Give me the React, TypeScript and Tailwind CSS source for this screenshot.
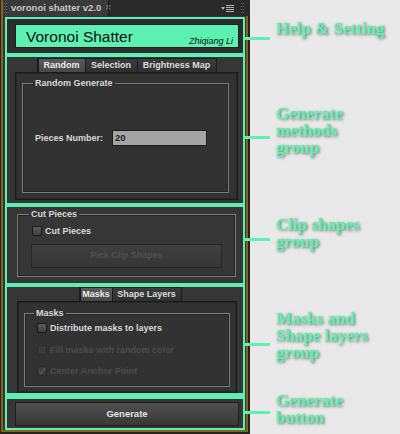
import React from "react";

function Grip() {
  return (
    <svg width="3" height="10" viewBox="0 0 3 10" className="shrink-0">
      <rect x="0" y="0" width="1" height="1" fill="#6a6a6a" />
      <rect x="2" y="0" width="1" height="1" fill="#6a6a6a" />
      <rect x="0" y="3" width="1" height="1" fill="#6a6a6a" />
      <rect x="2" y="3" width="1" height="1" fill="#6a6a6a" />
      <rect x="0" y="6" width="1" height="1" fill="#6a6a6a" />
      <rect x="2" y="6" width="1" height="1" fill="#6a6a6a" />
      <rect x="0" y="9" width="1" height="1" fill="#6a6a6a" />
      <rect x="2" y="9" width="1" height="1" fill="#6a6a6a" />
    </svg>
  );
}

function MenuIcon() {
  return (
    <svg width="13" height="7" viewBox="0 0 13 7" className="shrink-0">
      <path d="M0 2 L4 2 L2 5 Z" fill="#b0b0b0" />
      <rect x="5" y="0" width="8" height="1" fill="#b0b0b0" />
      <rect x="5" y="2" width="8" height="1" fill="#b0b0b0" />
      <rect x="5" y="4" width="8" height="1" fill="#b0b0b0" />
      <rect x="5" y="6" width="8" height="1" fill="#b0b0b0" />
    </svg>
  );
}

function Check({ checked, disabled }: { checked?: boolean; disabled?: boolean }) {
  return (
    <div
      className={
        disabled
          ? "w-[10px] h-[10px] shrink-0 rounded-[2px] border border-[#2b2b2b] bg-[#3a3a3a] flex items-center justify-center"
          : "w-[10px] h-[10px] shrink-0 rounded-[2px] border border-[#1a1a1a] bg-linear-to-b from-[#5e5e5e] to-[#3d3d3d] flex items-center justify-center"
      }
    >
      {checked && (
        <svg width="8" height="8" viewBox="0 0 8 8">
          <path d="M1 4 L3 6.5 L7 1" stroke="#555555" strokeWidth="1.6" fill="none" />
        </svg>
      )}
    </div>
  );
}

function Tab({ label, active, w }: { label: string; active?: boolean; w: string }) {
  return (
    <div
      className={
        active
          ? `${w} h-full flex items-center justify-center text-[9px] font-bold leading-none border-t border-x border-[#1c1c1c] bg-linear-to-b from-[#5a5a5a] to-[#484848] text-[#ececec]`
          : `${w} h-full flex items-center justify-center text-[9px] font-bold leading-none border-t border-r border-[#1c1c1c] bg-linear-to-b from-[#3c3c3c] to-[#2f2f2f] text-[#dedede]`
      }
    >
      {label}
    </div>
  );
}

const labelText = "text-[9px] font-bold leading-[12px] text-[#dadada]";

export default function App() {
  return (
    <div className="w-[400px] h-[434px] flex bg-[#e9e9e9] overflow-hidden font-['Liberation_Sans',Arial,sans-serif]">
      {/* Panel */}
      <div className="w-[250px] h-full shrink-0 bg-[#242424] flex flex-col">
        {/* tab strip */}
        <div className="h-[16px] flex bg-[#2a2a2a]">
          <div className="ml-[1px] w-[107px] h-full bg-[#3a3a3a] border-l-2 border-[#84641a] flex items-center">
            <div className="ml-[1px]">
              <Grip />
            </div>
            <span className="ml-[4px] text-[9.5px] font-bold text-[#c8c8c8] leading-none whitespace-nowrap">
              voronoi shatter v2.0
            </span>
            <span className="ml-[4px] text-[10px] text-[#8a8a8a] leading-none">×</span>
          </div>
          <div className="w-px h-full bg-[#1c1c1c]" />
          <div className="flex-1 flex items-center justify-end pr-[6px] gap-[7px]">
            <MenuIcon />
            <Grip />
          </div>
        </div>

        {/* body */}
        <div className="ml-[1px] w-[247px] h-[416px] border-x-2 border-b-2 border-[#84641a] bg-[#363636] flex flex-col">
          {/* Box 1: title */}
          <div className="ml-[2px] mt-[1px] w-[240px] h-[38px] shrink-0 border-2 border-[#5cf0b2] bg-[#2d2d2d] pt-[5px] pl-[8px] pr-[4px]">
            <div className="h-[24px] bg-[#5cf0b2] border border-[#1e1e1e] flex justify-between">
              <span className="self-center pt-[2px] pl-[10px] text-[15.5px] leading-none text-[#111] whitespace-nowrap">
                Voronoi Shatter
              </span>
              <span className="self-end pb-[1px] pr-[5px] text-[9px] italic leading-[10px] text-[#111] whitespace-nowrap">
                Zhiqiang Li
              </span>
            </div>
          </div>

          {/* Box 2: generate methods */}
          <div className="ml-[2px] w-[240px] h-[150px] shrink-0 border-2 border-[#5cf0b2] flex flex-col pt-[1px] pl-[8px] pr-[5px] pb-[3px]">
            <div className="h-[14px] shrink-0 flex justify-center">
              <div className="flex border-l border-[#1c1c1c]">
                <Tab label="Random" active w="w-[48px]" />
                <Tab label="Selection" w="w-[52px]" />
                <Tab label="Brightness Map" w="w-[79px]" />
              </div>
            </div>
            <div className="flex-1 border border-[#1a1a1a] shadow-[inset_0_0_0_1px_#272727] bg-[#323232] pt-[4px] pl-[6px] pr-[8px] pb-[6px] flex flex-col">
              <fieldset className="flex-1 min-w-0 border border-[#7c7c7c] shadow-[inset_0_0_0_1px_#262626]">
                <legend className={`ml-[10px] px-[2px] ${labelText}`}>Random Generate</legend>
                <div className="mt-[41px] pl-[12px] flex items-center">
                  <span className={`w-[77px] ${labelText}`}>Pieces Number:</span>
                  <div className="w-[95px] h-[16px] bg-[#a4a4a4] border border-[#1b1b1b] pl-[2px] pt-[1px] text-[9.5px] font-bold leading-[12px] text-[#1e1e1e]">
                    20
                  </div>
                </div>
              </fieldset>
            </div>
          </div>

          {/* Box 3: clip shapes */}
          <div className="ml-[2px] w-[240px] h-[80px] shrink-0 border-2 border-[#5cf0b2] pt-[1px] pl-[10px] pr-[7px] pb-[6px] flex flex-col">
            <fieldset className="flex-1 min-w-0 border border-[#7c7c7c] shadow-[inset_0_0_0_1px_#262626]">
              <legend className={`ml-[11px] px-[2px] ${labelText}`}>Cut Pieces</legend>
              <div className="mt-[6px] ml-[14px] h-[10px] flex items-center gap-[3px]">
                <Check />
                <span className="text-[9px] font-bold leading-[10px] text-[#dadada]">Cut Pieces</span>
              </div>
              <div className="mt-[8px] ml-[13px] w-[191px] h-[24px] border border-[#262626] bg-linear-to-b from-[#3f3f3f] to-[#363636] flex items-center justify-center text-[9px] font-bold text-[#505050]">
                Pick Clip Shapes
              </div>
            </fieldset>
          </div>

          {/* Box 4: masks & shape layers */}
          <div className="ml-[2px] w-[240px] h-[111px] shrink-0 border-x-2 border-t-2 border-b-[3px] border-[#5cf0b2] flex flex-col pl-[10px] pr-[6px]">
            <div className="h-[14px] shrink-0 flex justify-center pl-[6px]">
              <div className="flex border-l border-[#1c1c1c]">
                <Tab label="Masks" active w="w-[33px]" />
                <Tab label="Shape Layers" w="w-[69px]" />
              </div>
            </div>
            <div className="flex-1 border border-[#1a1a1a] shadow-[inset_0_0_0_1px_#272727] bg-[#323232] pt-[5px] px-[6px] pb-[5px] flex flex-col">
              <fieldset className="flex-1 min-w-0 border border-[#7c7c7c] shadow-[inset_0_0_0_1px_#262626]">
                <legend className={`ml-[9px] px-[2px] ${labelText}`}>Masks</legend>
                <div className="mt-[4px] ml-[12px] h-[10px] flex items-center gap-[3px]">
                  <Check />
                  <span className="text-[9px] font-bold leading-[10px] text-[#dadada] whitespace-nowrap">
                    Distribute masks to layers
                  </span>
                </div>
                <div className="mt-[12px] ml-[12px] h-[10px] flex items-center gap-[3px]">
                  <Check disabled />
                  <span className="text-[9px] font-bold leading-[10px] text-[#4c4c4c] whitespace-nowrap">
                    Fill masks with random color
                  </span>
                </div>
                <div className="mt-[11px] ml-[12px] h-[10px] flex items-center gap-[3px]">
                  <Check disabled checked />
                  <span className="text-[9px] font-bold leading-[10px] text-[#4c4c4c] whitespace-nowrap">
                    Center Anchor Point
                  </span>
                </div>
              </fieldset>
            </div>
          </div>

          {/* Box 5: generate button */}
          <div className="ml-[2px] w-[240px] h-[34px] shrink-0 border-x-2 border-b-2 border-t-[3px] border-[#5cf0b2] pt-[3px] pl-[8px] pr-[4px]">
            <div className="h-[24px] border border-[#1c1c1c] bg-linear-to-b from-[#4f4f4f] to-[#383838] flex items-center justify-center text-[9.5px] font-bold text-[#e4e4e4]">
              Generate
            </div>
          </div>
        </div>
      </div>

      {/* Annotations */}
      <div className="flex-1 flex relative">
        <div className="-ml-[5px] w-[25px] shrink-0 flex flex-col relative">
          <div className="mt-[37px] h-[3px] bg-[#5cf0b2]" />
          <div className="mt-[96px] h-[3px] bg-[#5cf0b2]" />
          <div className="mt-[99px] h-[3px] bg-[#5cf0b2]" />
          <div className="mt-[102px] h-[3px] bg-[#5cf0b2]" />
          <div className="mt-[65px] h-[3px] bg-[#5cf0b2]" />
        </div>
        <div className="ml-[6px] flex flex-col font-['Liberation_Serif',serif] font-bold text-[17px] leading-[17px] text-[#5cf0b2] [text-shadow:1px_1px_3px_rgba(0,0,0,0.55)] whitespace-nowrap">
          <div className="mt-[19.7px]">Help &amp; Setting</div>
          <div className="mt-[68.6px]">
            <div>Generate</div>
            <div>methods</div>
            <div>group</div>
          </div>
          <div className="mt-[60px]">
            <div>Clip shapes</div>
            <div>group</div>
          </div>
          <div className="mt-[60px]">
            <div>Masks and</div>
            <div>Shape layers</div>
            <div>group</div>
          </div>
          <div className="mt-[30.7px]">
            <div>Generate</div>
            <div>button</div>
          </div>
        </div>
      </div>
    </div>
  );
}
